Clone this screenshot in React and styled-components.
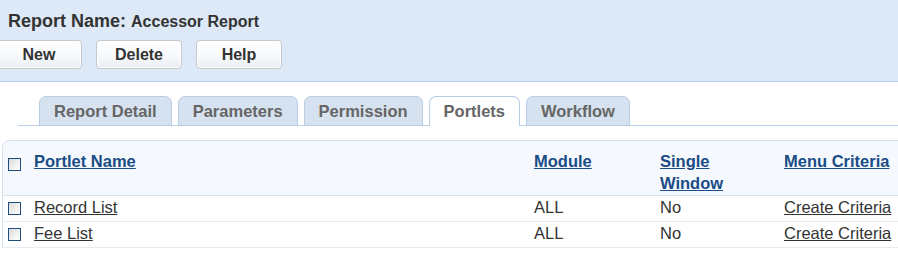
import React from 'react';
import styled, { createGlobalStyle } from 'styled-components';

const GlobalStyle = createGlobalStyle`
  html, body {
    margin: 0;
    padding: 0;
    background: #ffffff;
    overflow: hidden;
  }
  body {
    font-family: "Liberation Sans", Arial, sans-serif;
    color: #333333;
  }
`;

const HeaderBar = styled.div`
  background: #dde9f6;
  border-bottom: 1px solid #b7cfe6;
  padding: 11px 0 12px 8px;
`;

const Title = styled.div`
  font-weight: bold;
  font-size: 18px;
  line-height: 20px;
  color: #333333;
  white-space: nowrap;
`;

const TitleValue = styled.span`
  font-size: 16px;
`;

const ButtonRow = styled.div`
  display: flex;
  gap: 14px;
  margin-top: 8px;
  margin-left: -12px;
`;

const Button = styled.button`
  width: 86px;
  height: 29px;
  border: 1px solid #c6c9cc;
  border-radius: 4px;
  background: linear-gradient(#ffffff 0%, #f7f9fb 55%, #e9eef3 100%);
  box-shadow: inset 0 0 0 1px #ffffff;
  font-family: "Liberation Sans", Arial, sans-serif;
  font-weight: bold;
  font-size: 16px;
  color: #333333;
  padding: 0;
  cursor: pointer;
`;

const TabStrip = styled.div`
  display: flex;
  gap: 6px;
  margin: 14px 0 0 18px;
  padding-left: 21px;
  border-bottom: 1px solid #b9d1e8;
  height: 29px;
`;

const Tab = styled.div`
  height: ${props => (props.active ? '29px' : '28px')};
  line-height: 28px;
  padding: 0 14px;
  border: 1px solid #b7cde4;
  border-bottom: ${props => (props.active ? 'none' : '1px solid #b7cde4')};
  border-radius: 7px 7px 0 0;
  background: ${props => (props.active ? '#ffffff' : '#d6e2ef')};
  font-weight: bold;
  font-size: 16.5px;
  color: #666666;
  white-space: nowrap;
`;

const Panel = styled.div`
  margin: 14px -20px 0 2px;
  border: 1px solid #d3e2f0;
  border-right: none;
  border-bottom: none;
  border-top-left-radius: 8px;
  overflow: hidden;
`;

const GridRow = styled.div`
  display: grid;
  grid-template-columns: 31px 500px 126px 124px 1fr;
  border-bottom: 1px solid ${props => (props.head ? '#d6e4f1' : '#e3ebf3')};
  background: ${props => (props.head ? '#f5f9fd' : '#ffffff')};
  padding: ${props => (props.head ? '9px 0 1px' : '0 0 3px')};
  font-size: 16.5px;
  line-height: 22px;
`;

const Cell = styled.div`
  white-space: nowrap;
`;

const HeadLink = styled.a`
  font-weight: bold;
  color: #1a4c86;
  text-decoration: underline;
  display: inline-block;
  white-space: ${props => (props.wrap ? 'normal' : 'nowrap')};
  width: ${props => (props.wrap ? '70px' : 'auto')};
`;

const DataLink = styled.a`
  color: #333333;
  text-decoration: underline;
`;

const CheckCell = styled.div`
  padding-left: 5px;
  padding-top: ${props => (props.head ? '8px' : '6px')};
`;

const Check = styled.span`
  display: block;
  width: 11px;
  height: 11px;
  border: 1px solid #1f4e7d;
  background: linear-gradient(135deg, #d9d9d9 0%, #f2f2f2 60%, #ffffff 100%);
`;

const tabs = ['Report Detail', 'Parameters', 'Permission', 'Portlets', 'Workflow'];

const rows = [
  { name: 'Record List', module: 'ALL', single: 'No', menu: 'Create Criteria' },
  { name: 'Fee List', module: 'ALL', single: 'No', menu: 'Create Criteria' },
];

const App = () => {
  return (
    <>
      <GlobalStyle />
      <HeaderBar>
        <Title>
          Report Name: <TitleValue>Accessor Report</TitleValue>
        </Title>
        <ButtonRow>
          <Button>New</Button>
          <Button>Delete</Button>
          <Button>Help</Button>
        </ButtonRow>
      </HeaderBar>
      <TabStrip>
        {tabs.map(t => (
          <Tab key={t} active={t === 'Portlets'}>{t}</Tab>
        ))}
      </TabStrip>
      <Panel>
        <GridRow head>
          <CheckCell head><Check /></CheckCell>
          <Cell><HeadLink>Portlet Name</HeadLink></Cell>
          <Cell><HeadLink>Module</HeadLink></Cell>
          <Cell><HeadLink wrap>Single Window</HeadLink></Cell>
          <Cell><HeadLink>Menu Criteria</HeadLink></Cell>
        </GridRow>
        {rows.map(r => (
          <GridRow key={r.name}>
            <CheckCell><Check /></CheckCell>
            <Cell><DataLink>{r.name}</DataLink></Cell>
            <Cell>{r.module}</Cell>
            <Cell>{r.single}</Cell>
            <Cell><DataLink>{r.menu}</DataLink></Cell>
          </GridRow>
        ))}
      </Panel>
    </>
  );
};

export default App;
